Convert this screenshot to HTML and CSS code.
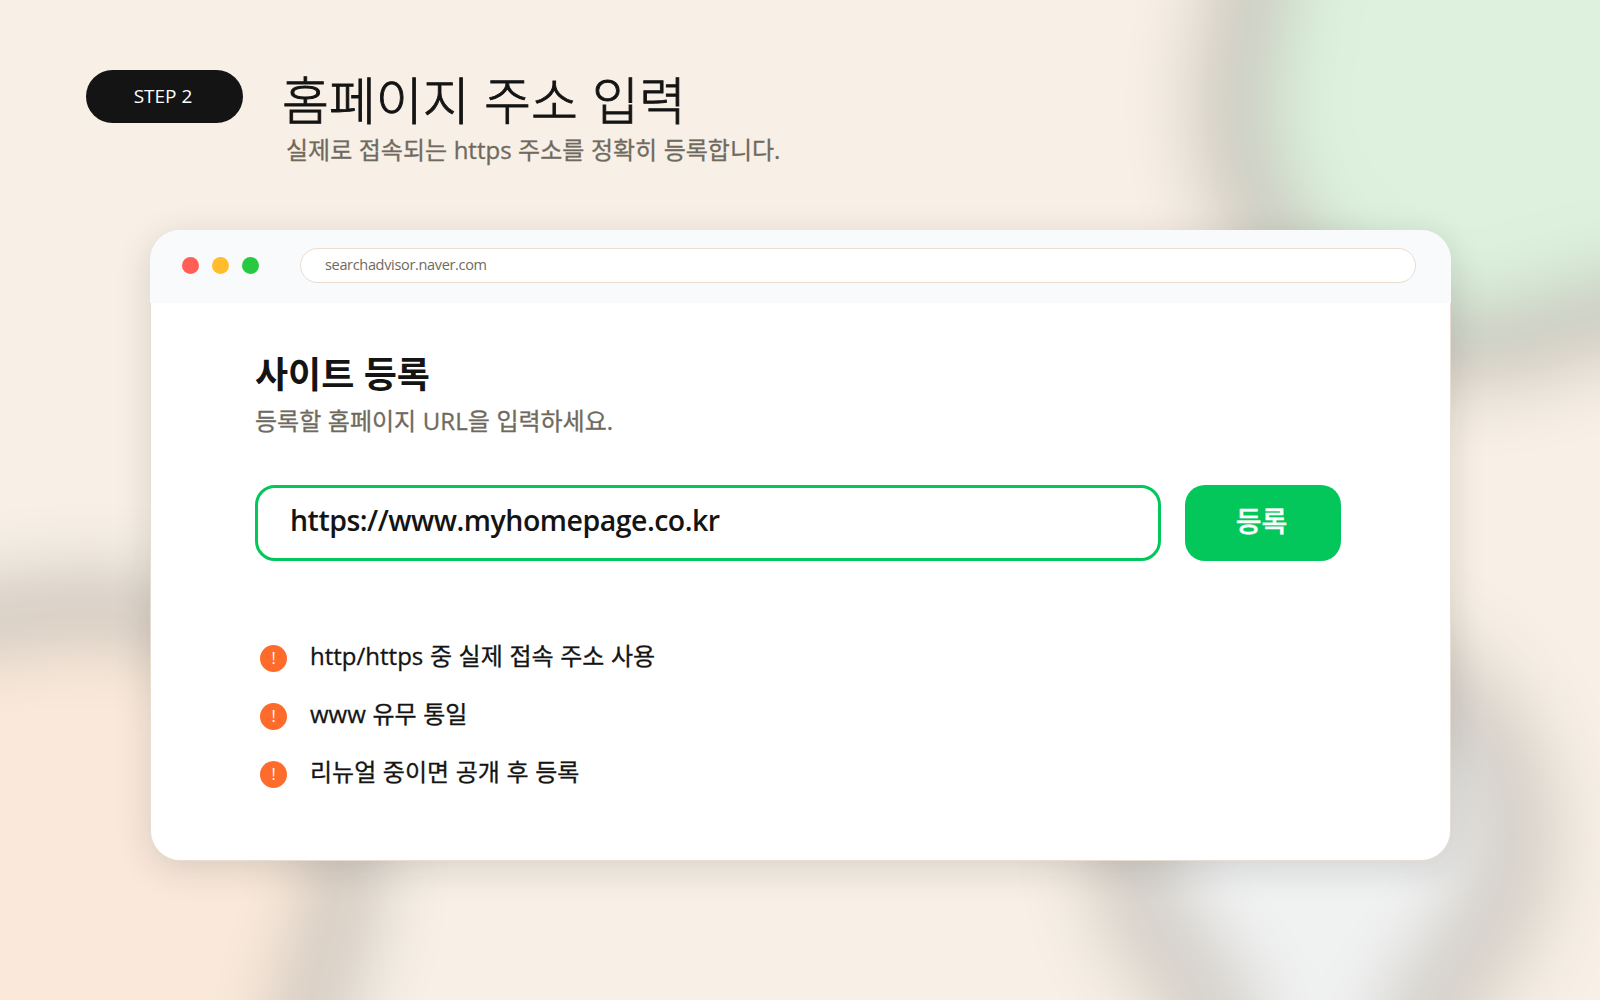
FILE: index.html
```html
<!DOCTYPE html>
<html lang="ko">
<head>
<meta charset="utf-8">
<title>홈페이지 주소 입력</title>
<link rel="stylesheet" href="styles.css">
</head>
<body>
<svg class="backdrop" viewBox="0 0 1600 1000" aria-hidden="true">
  <defs>
    <filter id="glow-green" filterUnits="userSpaceOnUse" x="-200" y="-300" width="2200" height="1500" color-interpolation-filters="sRGB">
      <feGaussianBlur stdDeviation="49" result="soft"/>
      <feFlood flood-color="#000" result="base"/>
      <feMerge><feMergeNode in="base"/><feMergeNode in="soft"/></feMerge>
      <feColorMatrix values="1 0 0 0 0  0 1 0 0 0  0 0 1 0 0  0 .515 0 0 0"/>
    </filter>
    <filter id="glow-peach" filterUnits="userSpaceOnUse" x="-300" y="-200" width="2100" height="1500" color-interpolation-filters="sRGB">
      <feGaussianBlur stdDeviation="47" result="soft"/>
      <feFlood flood-color="#000" result="base"/>
      <feMerge><feMergeNode in="base"/><feMergeNode in="soft"/></feMerge>
      <feColorMatrix values="1 0 0 0 0  0 1 0 0 0  0 0 1 0 0  .47 0 0 0 0"/>
    </filter>
    <filter id="glow-blue" filterUnits="userSpaceOnUse" x="-200" y="-200" width="2000" height="1500" color-interpolation-filters="sRGB">
      <feGaussianBlur stdDeviation="50" result="soft"/>
      <feFlood flood-color="#000" result="base"/>
      <feMerge><feMergeNode in="base"/><feMergeNode in="soft"/></feMerge>
      <feColorMatrix values="1 0 0 0 0  0 1 0 0 0  0 0 1 0 0  0 0 .47 0 0"/>
    </filter>
  </defs>
  <g fill="#c0f2d5" filter="url(#glow-green)">
    <path d="M1252 0A240 248 0 0 0 1600 312H1950V-250H1252Z"/>
  </g>
  <g fill="#fde2ce" filter="url(#glow-peach)">
    <path d="M0 620A260 256 0 0 1 306 1000V1250H-250V620Z"/>
  </g>
  <g fill="#e8f4ff" filter="url(#glow-blue)">
    <path d="M1222 1000A196 190 0 1 1 1420 1000V1250H1222Z"/>
  </g>
</svg>
<main class="page">
  <header class="intro">
    <span class="step">STEP 2</span>
    <div class="intro-text">
      <h1 class="title">홈페이지 주소 입력</h1>
      <p class="subtitle">실제로 접속되는 https 주소를 정확히 등록합니다.</p>
    </div>
  </header>
  <section class="browser">
    <div class="toolbar">
      <i class="dot red"></i><i class="dot yellow"></i><i class="dot green"></i>
      <div class="address">searchadvisor.naver.com</div>
    </div>
    <div class="content">
      <h2 class="heading">사이트 등록</h2>
      <p class="hint">등록할 홈페이지 URL을 입력하세요.</p>
      <div class="form">
        <div class="field"><span class="url">https://www.myhomepage.co.kr</span></div>
        <button class="submit">등록</button>
      </div>
      <ul class="notes">
        <li><span class="mark">!</span><span class="note">http/https 중 실제 접속 주소 사용</span></li>
        <li><span class="mark">!</span><span class="note">www 유무 통일</span></li>
        <li><span class="mark">!</span><span class="note">리뉴얼 중이면 공개 후 등록</span></li>
      </ul>
    </div>
  </section>
</main>
</body>
</html>
```
FILE: styles.css
```css
* { box-sizing: border-box; margin: 0; padding: 0; }
body {
  width: 1600px; height: 1000px; overflow: hidden;
  background: #f8f0e6; color: #141414;
  font-family: "Open Sans", "Noto Sans CJK KR", sans-serif;
}
.backdrop { position: absolute; inset: 0; width: 1600px; height: 1000px; z-index: -1; }
.page { padding: 70px 149px 0 86px; }
.intro { display: flex; gap: 39px; height: 160px; }
.step {
  width: 157px; height: 53px; border-radius: 27px; background: #141414; color: #fff;
  font-size: 19px; line-height: 53px; text-align: center; padding-right: 3px;
}
.title { font-size: 51px; font-weight: 300; line-height: 56px; white-space: nowrap; font-family: "Noto Sans CJK KR", sans-serif; -webkit-text-stroke: .9px #141414; }
.subtitle { margin-top: 6px; font-size: 24px; line-height: 36px; padding-left: 4px; color: #706a5e; white-space: nowrap; word-spacing: .3px; -webkit-text-stroke: .3px #706a5e; }
.browser {
  margin-left: 64px; width: 1301px; height: 631px; border-radius: 30px; background: #fff;
  border: 1px solid #e8ddd0; border-top: 0;
  box-shadow: 0 8px 36px rgba(20, 20, 20, .14);
}
.toolbar {
  margin: 0 -1px; height: 73px; border-radius: 30px 30px 0 0; background: #f8fafc;
  display: flex; padding: 18px 35px 0 32px; gap: 13px;
}
.dot { width: 17px; height: 17px; border-radius: 50%; margin-top: 9px; }
.red { background: #ff5f57; }
.yellow { background: #ffbd2e; }
.green { background: #28c840; }
.address {
  flex: 1; margin-left: 28px; height: 35px; border: 1px solid #e8ddd0; border-radius: 18px; background: #fff;
  padding-left: 24px; font-size: 14.5px; line-height: 32px; letter-spacing: -.33px; color: #706a5e;
}
.content { padding: 48px 109px 0 104px; }
.heading { font-size: 36px; line-height: 48px; font-weight: 600; }
.hint { margin-top: 4px; font-size: 24px; line-height: 36px; color: #706a5e; word-spacing: .4px; -webkit-text-stroke: .3px #706a5e; }
.form { display: flex; gap: 24px; margin-top: 46px; }
.field { flex: 1; height: 76px; border: 3px solid #03c75a; border-radius: 20px; padding-left: 32px; }
.url { font-size: 28.5px; font-weight: 600; line-height: 65px; letter-spacing: -.5px; }
.submit {
  width: 156px; height: 76px; border: 0; border-radius: 20px; background: #03c75a; color: #fff;
  font: 500 28px/70px "Noto Sans CJK KR", sans-serif; padding: 0 3px 6px 0; -webkit-text-stroke: .4px #fff;
}
.notes { list-style: none; margin-top: 76px; padding-left: 5px; }
.notes li { display: flex; height: 58px; gap: 23px; }
.mark {
  width: 27px; height: 27px; margin-top: 8px; border-radius: 50%; background: #ff6b2b; color: #fff;
  text-align: center; font-size: 16px; line-height: 26px;
}
.note { font-size: 24px; line-height: 38px; white-space: nowrap; word-spacing: .4px; -webkit-text-stroke: .3px #141414; }
```
